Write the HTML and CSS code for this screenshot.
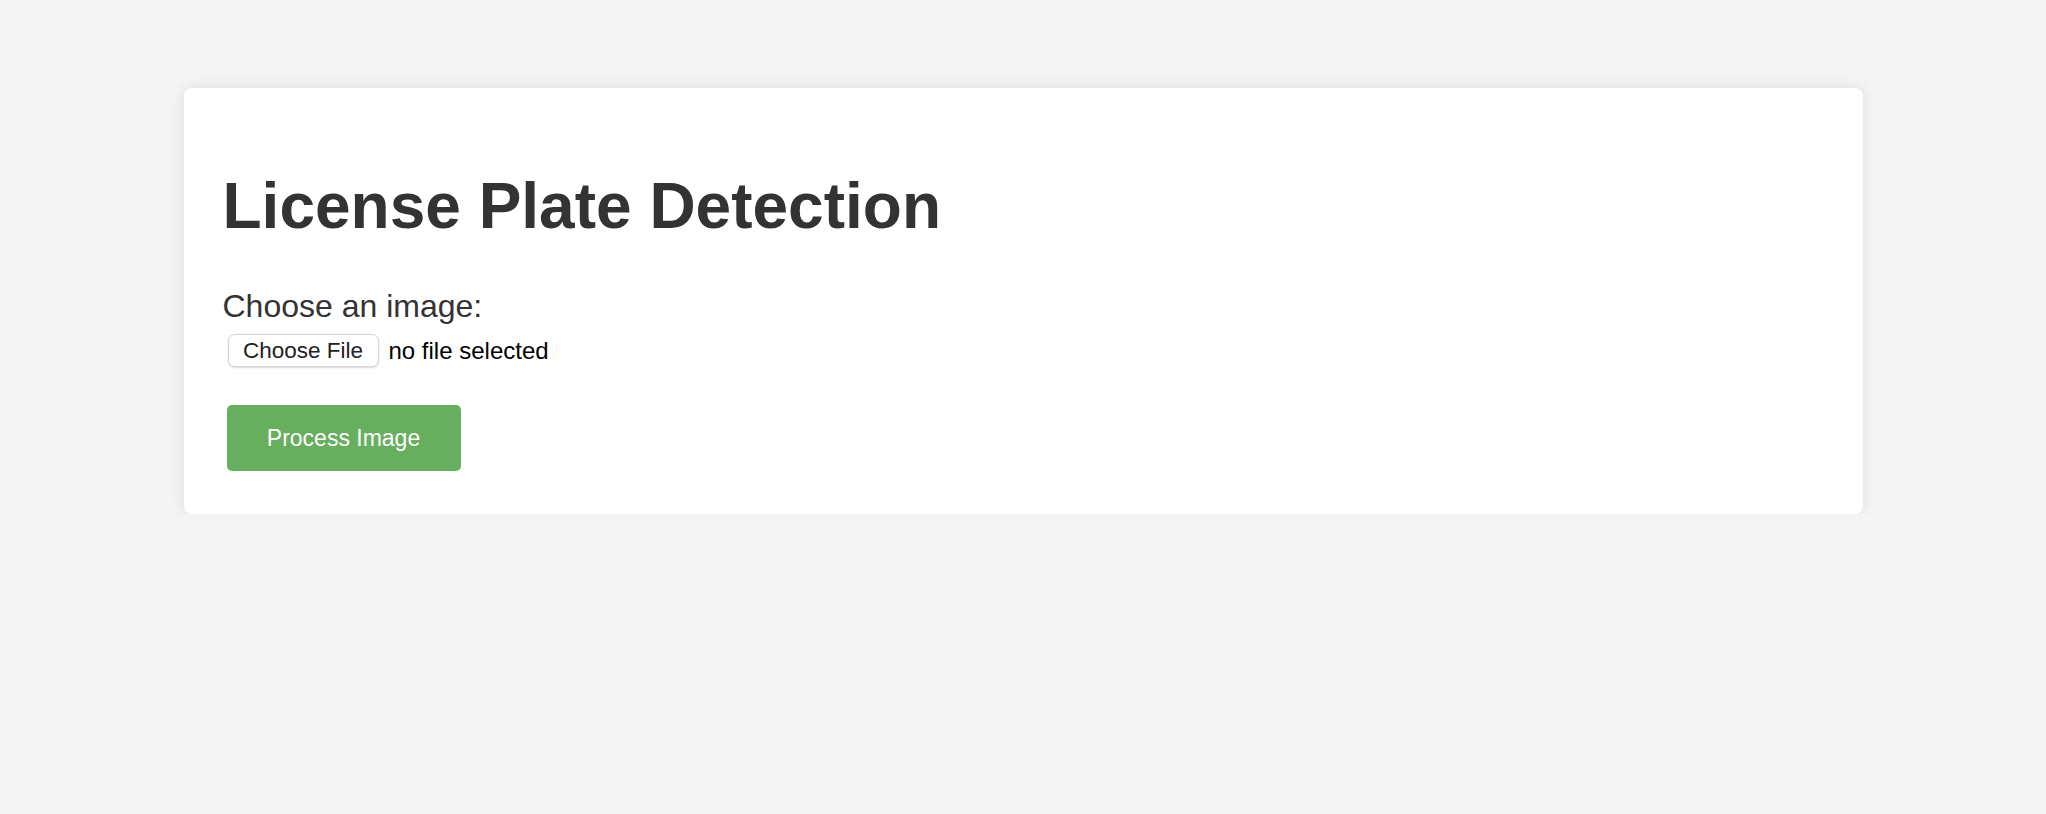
FILE: index.html
```html
<!DOCTYPE html>
<html lang="en">
<head>
<meta charset="utf-8">
<title>License Plate Detection</title>
<link rel="stylesheet" href="styles.css">
</head>
<body>
<div class="card">
  <h1 class="title">License Plate Detection</h1>
  <form class="form">
    <label class="label" for="file">Choose an image:</label>
    <div class="file-row">
      <button type="button" class="file-btn" id="file">Choose File</button>
      <span class="file-name">no file selected</span>
    </div>
    <button type="button" class="submit">Process Image</button>
  </form>
</div>
</body>
</html>
```

FILE: styles.css
```css
* { box-sizing: border-box; }
html, body { margin: 0; padding: 0; }
body {
  background: #f4f4f4;
  font-family: "Liberation Sans", Arial, Helvetica, sans-serif;
  color: #333;
}
.card {
  width: 1679px;
  margin: 88px auto 0;
  background: #fff;
  border-radius: 8px;
  box-shadow: 0 0 14px rgba(0, 0, 0, 0.1);
  padding: 39px 39px 44px;
  height: 426px;
}
.title {
  font-size: 64px;
  font-weight: bold;
  line-height: 75px;
  margin: 42px 0 44px;
  color: #333;
}
.form {
  display: flex;
  flex-direction: column;
  align-items: flex-start;
}
.label {
  font-size: 32px;
  line-height: 36px;
  color: #333;
}
.file-row {
  display: flex;
  align-items: center;
  margin: 10px 0 0 5px;
  gap: 10px;
}
.file-btn {
  font-family: "Liberation Sans", Arial, sans-serif;
  font-size: 22.5px;
  color: #222;
  background: #fff;
  border: 1px solid #d4d4d4;
  border-radius: 7px;
  box-shadow: 0 1px 2px rgba(0, 0, 0, 0.15);
  height: 33px;
  width: 151px;
  padding: 0;
  line-height: 31px;
}
.file-name {
  font-size: 24px;
  color: #000;
}
.submit {
  margin: 38px 0 0 4px;
  width: 234px;
  height: 66px;
  background: #67ae5e;
  color: #fff;
  border: none;
  border-radius: 5px;
  font-family: "Liberation Sans", Arial, sans-serif;
  font-size: 23px;
  padding: 0;
}
```
